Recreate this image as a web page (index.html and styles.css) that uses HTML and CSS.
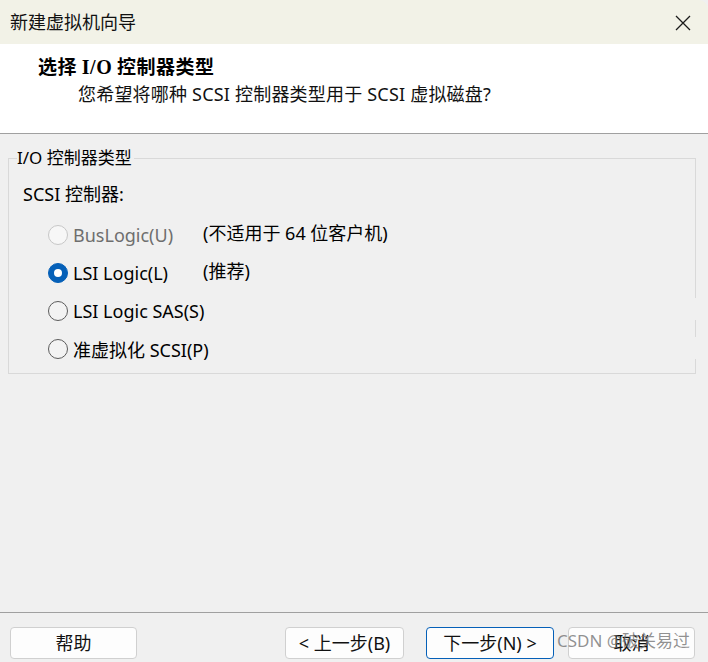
FILE: index.html
```html
<!DOCTYPE html>
<html lang="zh-CN">
<head>
<meta charset="utf-8">
<title>新建虚拟机向导</title>
<link rel="stylesheet" href="styles.css">
</head>
<body>
<div class="window">
  <div class="titlebar">
    <span class="title">新建虚拟机向导</span>
    <svg class="close" width="16" height="16" viewBox="0 0 16 16"><path d="M1 1L15 15M15 1L1 15" stroke="#1b1b1b" stroke-width="1.3" fill="none"/></svg>
  </div>
  <div class="header">
    <div class="h-title">选择 <span class="latin">I/O</span> 控制器类型</div>
    <div class="h-sub">您希望将哪种 SCSI 控制器类型用于 SCSI 虚拟磁盘?</div>
  </div>
  <div class="main">
    <fieldset class="group">
      <legend>I/O 控制器类型</legend>
      <div class="caption">SCSI 控制器:</div>
      <div class="options">
        <div class="opt disabled"><span class="radio"></span><span class="lbl">BusLogic(U)</span></div>
        <div class="note">(不适用于 64 位客户机)</div>
        <div class="opt"><span class="radio checked"></span><span class="lbl">LSI Logic(L)</span></div>
        <div class="note">(推荐)</div>
        <div class="opt wide"><span class="radio"></span><span class="lbl">LSI Logic SAS(S)</span></div>
        <div class="opt wide"><span class="radio"></span><span class="lbl">准虚拟化 SCSI(P)</span></div>
      </div>
    </fieldset>
  </div>
  <div class="footer">
    <button class="btn help">帮助</button>
    <div class="spacer"></div>
    <button class="btn prev">&lt; 上一步(B)</button>
    <button class="btn next">下一步(N) &gt;</button>
    <button class="btn cancel">取消</button>
    <span class="watermark">CSDN @破关易过</span>
  </div>
</div>
</body>
</html>
```

FILE: styles.css
```css
* { box-sizing: border-box; }
html, body { margin: 0; padding: 0; }
body {
  width: 708px;
  height: 662px;
  overflow: hidden;
  background: #f0f0f0;
  font-family: "Noto Sans", "Noto Sans CJK SC", sans-serif;
  font-size: 18px;
  color: #000;
}
.window {
  position: relative;
  display: flex;
  flex-direction: column;
  height: 662px;
}
.titlebar {
  height: 44px;
  flex: none;
  background: #f2f2e7;
  border-top-right-radius: 9px;
  display: flex;
  align-items: center;
  justify-content: space-between;
  padding: 0 17px 0 10px;
}
.title {
  font-size: 18px;
  font-family: "Noto Sans CJK SC", sans-serif;
  color: #111;
  line-height: 1;
  padding-bottom: 2px;
}
.close { display: block; margin-top: 1px; }
.header {
  flex: none;
  height: 90px;
  background: #fff;
  border-bottom: 1px solid #a0a0a0;
  padding-top: 11px;
}
.h-title {
  margin-left: 38px;
  font-size: 19px;
  font-weight: bold;
  line-height: 22px;
  font-family: "Noto Sans CJK SC", sans-serif;
  letter-spacing: 0.5px;
}
.h-title .latin { font-family: "Liberation Serif", serif; font-size: 20px; }
.h-sub {
  margin-left: 78px;
  margin-top: 5px;
  font-size: 18px;
  line-height: 22px;
  color: #111;
  letter-spacing: 0.2px;
}
.main {
  flex: 1;
  padding: 12px 12px 0 8px;
}
.group {
  position: relative;
  margin: 0;
  width: 688px;
  height: 228px;
  padding: 0 0 0 14px;
  border: 1px solid #d9d9d9;
}
.group::before, .group::after {
  content: "";
  position: absolute;
  right: -1px;
  width: 1px;
  height: 22px;
  background: #f0f0f0;
}
.group::before { bottom: 53px; }
.group::after { bottom: 14px; }
.group legend {
  margin-left: -6px;
  padding: 0 2px 0 0;
  font-size: 17px;
  line-height: 24px;
}
.caption {
  margin-top: 12px;
  line-height: 24px;
}
.options {
  margin-top: 13px;
  margin-left: 25px;
  display: grid;
  grid-template-columns: 155px auto;
  grid-auto-rows: 38px;
}
.opt {
  display: flex;
  align-items: center;
  gap: 5px;
  height: 32px;
  white-space: nowrap;
}
.opt.wide { grid-column: 1 / 3; }
.note { line-height: 28px; white-space: nowrap; }
.radio {
  width: 20px;
  height: 20px;
  border-radius: 50%;
  border: 1px solid #5c5c5c;
  background: #f3f3f3;
  flex: none;
  position: relative;
}
.radio.checked {
  background: #0560b8;
  border-color: #0560b8;
}
.radio.checked::after {
  content: "";
  position: absolute;
  left: 5px;
  top: 5px;
  width: 8px;
  height: 8px;
  border-radius: 50%;
  background: #fff;
}
.opt.disabled .radio { border-color: #c7c7c7; background: #f7f7f7; }
.opt.disabled .lbl { color: #6e6e6e; }
.footer {
  flex: none;
  height: 50px;
  border-top: 1px solid #a0a0a0;
  display: flex;
  align-items: flex-start;
  padding: 14px 13px 0 10px;
}
.spacer { flex: 1; }
.btn {
  height: 32px;
  background: #fdfdfd;
  border: 1px solid #d0d0d0;
  border-radius: 4px;
  font-family: "Noto Sans", "Noto Sans CJK SC", sans-serif;
  font-size: 18px;
  color: #111;
  padding: 0;
  line-height: 28px;
}
.help { width: 127px; }
.prev { width: 119px; }
.next { width: 128px; margin-left: 22px; border-color: #0560b8; }
.cancel { width: 127px; margin-left: 14px; }
.watermark {
  position: absolute;
  left: 557px;
  bottom: 9px;
  font-size: 17px;
  color: rgba(110, 110, 110, 0.75);
  line-height: 24px;
  pointer-events: none;
}
```
